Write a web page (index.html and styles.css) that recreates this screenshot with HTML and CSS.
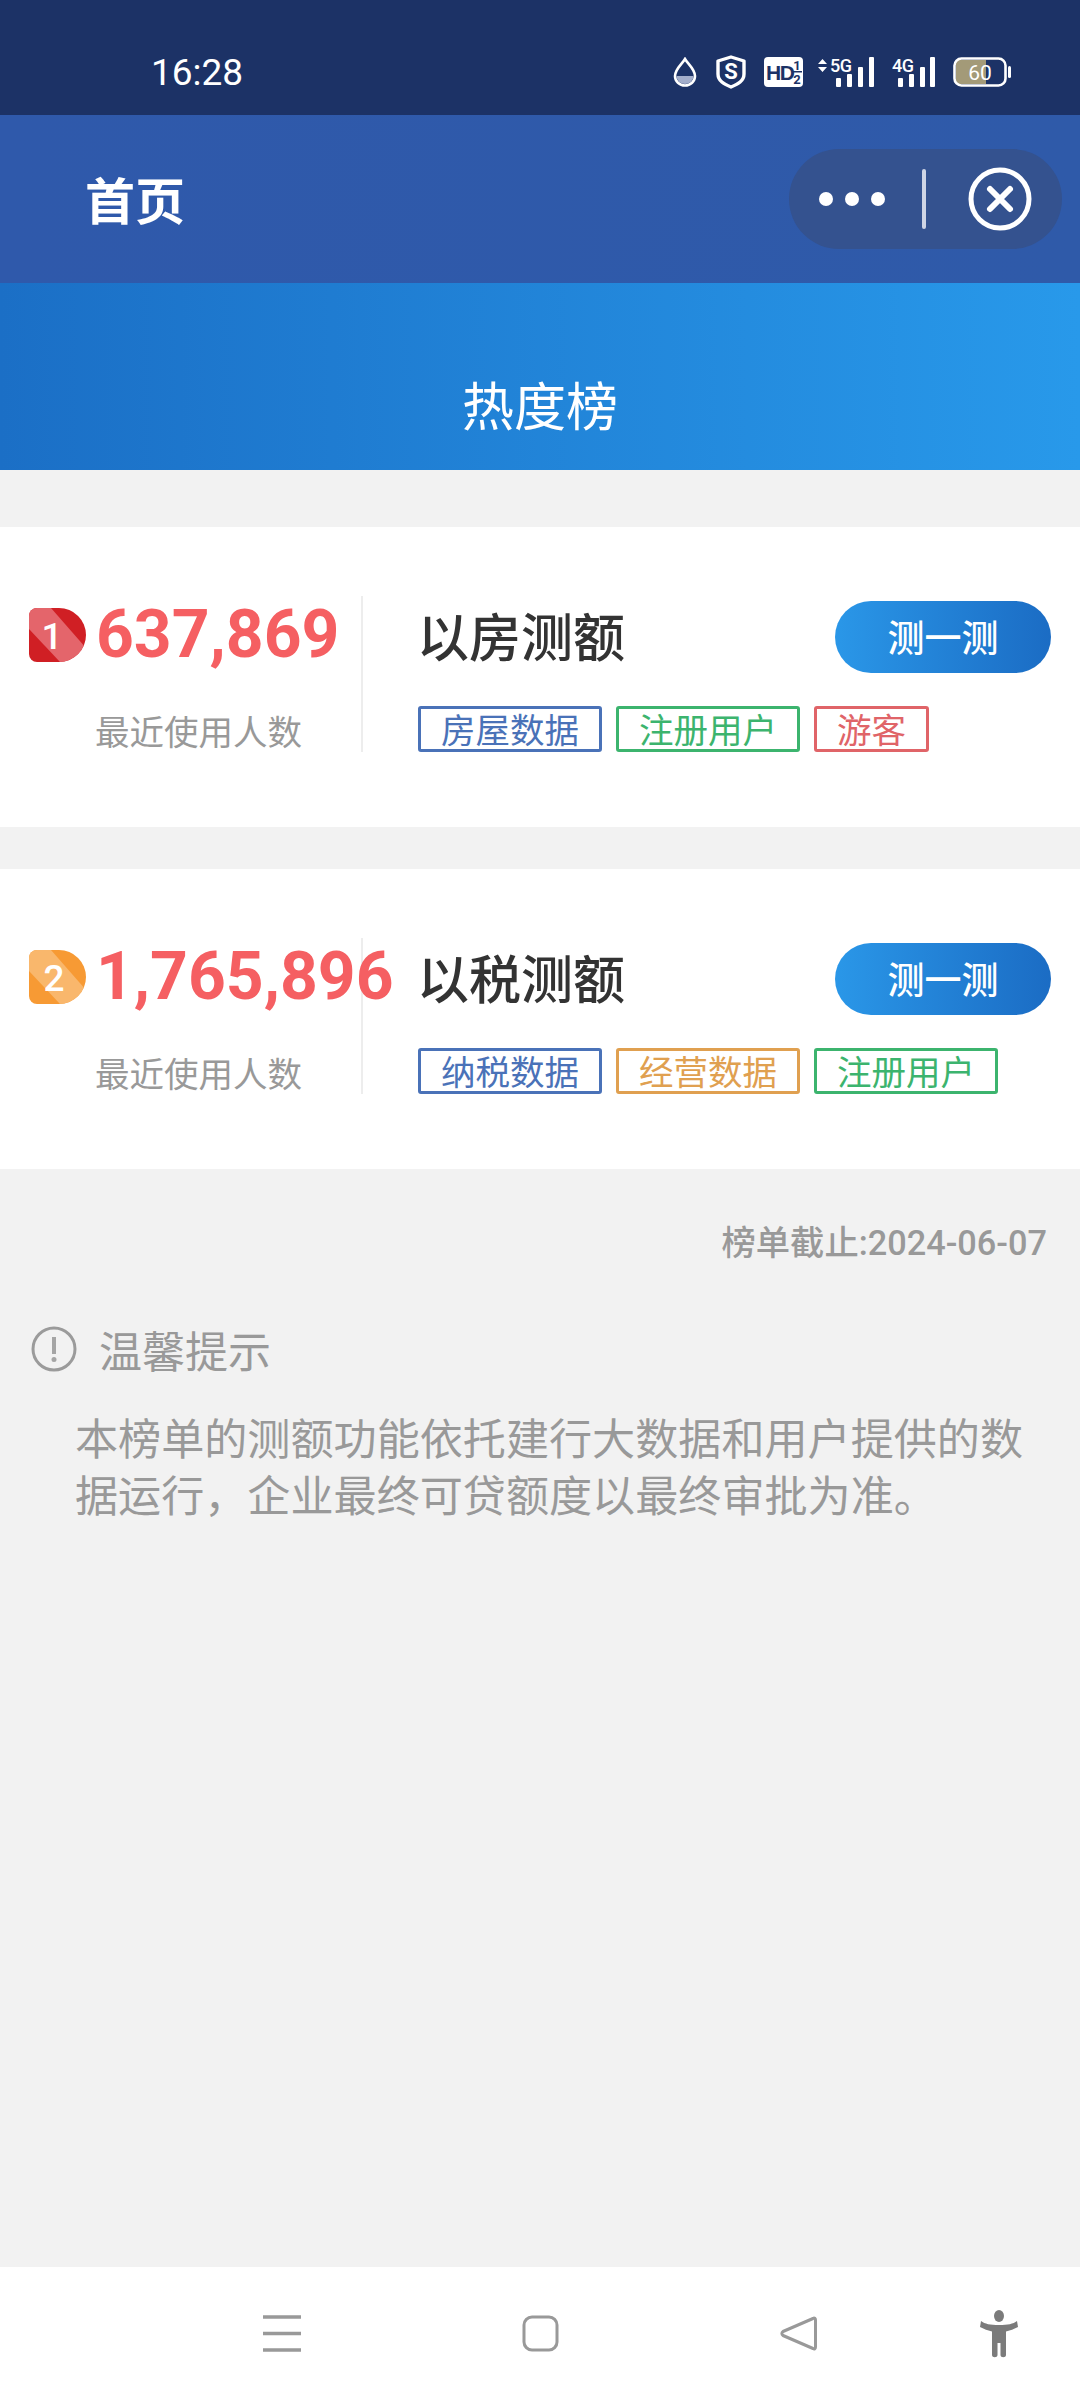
FILE: index.html
```html
<!DOCTYPE html>
<html lang="zh">
<head>
<meta charset="utf-8">
<title>热度榜</title>
<link rel="stylesheet" href="styles.css">
</head>
<body>
<div class="page">
  <header class="status">
    <span class="time">16:28</span>
    <div class="status-icons">
      <svg class="ic-drop" viewBox="0 0 24 30"><path d="M12 2C9 7 2 12 2 19a10 9.500 0 0 0 20 0C22 12 15 7 12 2Z" fill="none" stroke="#fff" stroke-width="2.600"/><path d="M3.500 19h17a8.500 8 0 0 1-17 0Z" fill="#a3aecb"/></svg>
      <svg class="ic-shield" viewBox="0 0 32 34"><path d="M3 6 16 2l13 4v13c0 7-6 10-13 13C9 29 3 26 3 19Z" fill="none" stroke="#fff" stroke-width="3.400" stroke-linejoin="round"/><text x="16" y="24" text-anchor="middle" class="svg-s">S</text></svg>
      <svg class="ic-hd" viewBox="0 0 39 30"><rect width="39" height="30" rx="4" fill="#fff"/><text x="2" y="23" class="svg-hd">HD</text><text x="33" y="13" text-anchor="middle" class="svg-frac">1</text><rect x="28" y="14" width="10" height="1.500" fill="#1c3266"/><text x="33" y="27" text-anchor="middle" class="svg-frac">2</text></svg>
      <svg class="ic-net ic-5g" viewBox="0 -4 56 34"><path d="m0 7 4.500-5 4.500 5Zm0 3 4.500 5 4.500-5Z" fill="#fff"/><text x="12" y="15" class="svg-g">5G</text><rect x="18" y="21" width="5" height="9" rx="1" fill="#fff"/><rect x="29" y="17" width="5" height="13" rx="1" fill="#fff"/><rect x="40" y="10" width="5" height="20" rx="1" fill="#fff"/><rect x="51" y="0" width="5" height="30" rx="1" fill="#fff"/></svg>
      <svg class="ic-net ic-4g" viewBox="0 -4 43 34"><text x="0" y="15" class="svg-g">4G</text><rect x="6" y="21" width="5" height="9" rx="1" fill="#fff"/><rect x="17" y="17" width="5" height="13" rx="1" fill="#fff"/><rect x="28" y="10" width="5" height="20" rx="1" fill="#fff"/><rect x="38" y="0" width="5" height="30" rx="1" fill="#fff"/></svg>
      <svg class="ic-batt" viewBox="0 0 58 30"><rect x="3" y="3" width="30" height="24" fill="#a39a78"/><rect x="1.500" y="1.500" width="51" height="27" rx="7" fill="none" stroke="#fff" stroke-width="2.600"/><rect x="55" y="9" width="3" height="12" rx="1.500" fill="#fff"/><text x="27" y="23" text-anchor="middle" class="svg-batt">60</text></svg>
    </div>
  </header>

  <nav class="nav">
    <span class="nav-title">首页</span>
    <div class="capsule">
      <div class="dots"><i></i><i></i><i></i></div>
      <span class="capsule-sep"></span>
      <svg class="capsule-close" viewBox="0 0 64 64"><circle cx="32" cy="32" r="29" fill="none" stroke="#fff" stroke-width="5"/><path d="M22 22l20 20M42 22 22 42" stroke="#fff" stroke-width="6" stroke-linecap="round"/></svg>
    </div>
  </nav>

  <div class="banner">热度榜</div>

  <section class="card card-first">
    <div class="stat">
      <div class="stat-top">
        <svg class="rank" viewBox="0 0 57 54"><defs><clipPath id="rank-a"><path d="M8 0h22a27 27 0 0 1 0 54H8a8 8 0 0 1-8-8V8a8 8 0 0 1 8-8Z"/></clipPath></defs><g clip-path="url(#rank-a)"><rect width="57" height="54" fill="#d01f24"/><path d="M0 0H22L57 40V54H31L0 21Z" fill="#e4656b"/></g><text x="23" y="41" text-anchor="middle" class="rank-num">1</text></svg>
        <span class="num">637,869</span>
      </div>
      <div class="stat-label">最近使用人数</div>
    </div>
    <div class="info">
      <div class="info-top">
        <h2 class="title">以房测额</h2>
        <button class="go">测一测</button>
      </div>
      <div class="tags">
        <span class="tag tag-blue">房屋数据</span>
        <span class="tag tag-green">注册用户</span>
        <span class="tag tag-red">游客</span>
      </div>
    </div>
  </section>

  <section class="card card-second">
    <div class="stat">
      <div class="stat-top">
        <svg class="rank" viewBox="0 0 57 54"><defs><clipPath id="rank-b"><path d="M8 0h22a27 27 0 0 1 0 54H8a8 8 0 0 1-8-8V8a8 8 0 0 1 8-8Z"/></clipPath></defs><g clip-path="url(#rank-b)"><rect width="57" height="54" fill="#f79a34"/><path d="M0 0H22L57 40V54H31L0 21Z" fill="#f9b76c"/></g><text x="25" y="41" text-anchor="middle" class="rank-num">2</text></svg>
        <span class="num">1,765,896</span>
      </div>
      <div class="stat-label">最近使用人数</div>
    </div>
    <div class="info">
      <div class="info-top">
        <h2 class="title">以税测额</h2>
        <button class="go">测一测</button>
      </div>
      <div class="tags">
        <span class="tag tag-blue">纳税数据</span>
        <span class="tag tag-orange">经营数据</span>
        <span class="tag tag-green">注册用户</span>
      </div>
    </div>
  </section>

  <p class="deadline">榜单截止:2024-06-07</p>

  <section class="tip">
    <div class="tip-head">
      <svg class="tip-icon" viewBox="0 0 46 46"><circle cx="23" cy="23" r="21" fill="none" stroke="#9b9b9b" stroke-width="3"/><path d="M23 11v17" stroke="#a5a5a5" stroke-width="4"/><circle cx="23" cy="33.500" r="2.500" fill="#a5a5a5"/></svg>
      <span>温馨提示</span>
    </div>
    <p class="tip-text">本榜单的测额功能依托建行大数据和用户提供的数据运行，企业最终可贷额度以最终审批为准。</p>
  </section>

  <footer class="sysnav">
    <svg class="sys-menu" viewBox="0 0 38 37"><path d="M0 2h38M0 18.500h38M0 35h38" stroke="#999" stroke-width="3.400"/></svg>
    <svg class="sys-home" viewBox="0 0 37 37"><rect x="2" y="2" width="33" height="33" rx="8" fill="none" stroke="#999" stroke-width="3"/></svg>
    <svg class="sys-back" viewBox="0 0 37 37"><path d="M33 3.500c1.500-1 2.500 0 2.500 1.500v27c0 1.500-1 2.500-2.500 1.500L3 20.500c-1.500-1-1.500-3 0-4Z" fill="none" stroke="#999" stroke-width="3" stroke-linejoin="round"/></svg>
    <svg class="sys-person" viewBox="0 0 38 48"><ellipse cx="19" cy="6" rx="5" ry="6" fill="#7b7b7b"/><path d="M1 11C5 14 10 15 19 15S33 14 37 11L38 17C34 19 30 20.500 26 21.500V45C26 48 20.500 48 20.500 45V33H17.500V45C17.500 48 12 48 12 45V21.500C8 20.500 4 19 0 17Z" fill="#7b7b7b"/></svg>
  </footer>
</div>
</body>
</html>
```
FILE: styles.css
```css
* { box-sizing: border-box; }
html, body { margin: 0; padding: 0; }
body { font-family: "Noto Sans CJK SC", Roboto, sans-serif; }
.page {
  width: 1080px;
  height: 2400px;
  background: #f2f2f2;
  display: flex;
  flex-direction: column;
  overflow: hidden;
}

.status {
  height: 115px;
  background: #1c3266;
  display: flex;
  align-items: center;
  padding: 29px 69px 0 151px;
  flex: none;
}
.time { font-family: Roboto, sans-serif; font-size: 37px; color: #fff; line-height: 1; }
.status-icons { margin-left: auto; display: flex; align-items: center; gap: 18px; }
.status-icons svg { height: 30px; display: block; }
.ic-drop { width: 24px; }
.status-icons .ic-shield { width: 32px; height: 34px; }
.ic-hd { width: 39px; margin-left: -1px; }
.status-icons .ic-net { height: 34px; margin-top: -4px; }
.ic-5g { width: 56px; margin-left: -3px; }
.ic-4g { width: 43px; }
.svg-s { font: 700 22px Roboto, sans-serif; fill: #fff; }
.svg-hd { font: 700 21px "Liberation Sans", sans-serif; fill: #1c3266; letter-spacing: -1.500px; }
.svg-frac { font: 700 13px Roboto, sans-serif; fill: #1c3266; }
.svg-g { font: 500 18px Roboto, sans-serif; fill: #fff; letter-spacing: -.5px; }
.svg-batt { font: 400 21px Roboto, sans-serif; fill: #fff; }
.ic-batt { width: 58px; }

.nav {
  height: 168px;
  background: linear-gradient(90deg, #2f59ab, #2f5aa9);
  display: flex;
  align-items: center;
  padding: 0 18px 0 85px;
  flex: none;
}
.nav-title { font-size: 50px; font-weight: 700; color: #fff; line-height: 1; margin-top: -2px; }
.capsule {
  margin-left: auto;
  width: 273px;
  height: 100px;
  border-radius: 50px;
  background: #34528f;
  display: flex;
  align-items: center;
  padding-left: 30px;
}
.dots { display: flex; gap: 12px; width: 64px; }
.dots i { width: 14px; height: 14px; border-radius: 50%; background: #fff; display: block; flex: none; }
.capsule-sep { width: 4px; height: 60px; background: #ced5e6; border-radius: 2px; margin-left: 39px; }
.capsule-close { width: 64px; height: 64px; margin-left: 42px; }

.banner {
  height: 187px;
  background: linear-gradient(90deg, #1b6fc6, #2899ea);
  color: #fff;
  font-size: 52px;
  text-align: center;
  line-height: 60px;
  padding-top: 91px;
  flex: none;
}

.card {
  height: 300px;
  background: #fff;
  display: flex;
  flex: none;
}
.card-first { margin-top: 57px; }
.card-second { margin-top: 42px; }

.stat {
  width: 363px;
  flex: none;
  margin-top: 69px;
  height: 156px;
  padding-left: 29px;
  border-right: 2px solid #ededed;
  white-space: nowrap;
}
.stat-top { display: flex; align-items: flex-start; }
.rank { width: 57px; height: 54px; flex: none; margin-top: 12px; }
.rank-num { font: 500 37px Roboto, sans-serif; fill: #fff; }
.num {
  font-family: Roboto, sans-serif;
  font-weight: 700;
  font-size: 66px;
  line-height: 78px;
  color: #f55f62;
  margin-left: 10px;
}
.stat-label {
  font-size: 34.500px;
  line-height: 48px;
  color: #999;
  margin: 32px 0 0 66px;
}

.info { flex: 1; padding: 74px 29px 0 54px; }
.info-top { display: flex; align-items: center; justify-content: space-between; height: 72px; }
.title { margin: -4px 0 0; font-size: 52px; font-weight: 500; color: #333; line-height: 72px; }
.go {
  width: 216px;
  height: 72px;
  border: 0;
  padding: 0 0 2px;
  border-radius: 36px;
  background: linear-gradient(90deg, #2a97e8, #1b6cc4);
  color: #fff;
  font-family: inherit;
  font-size: 37px;
  font-weight: 500;
}
.tags { display: flex; gap: 14px; margin-top: 33px; margin-left: 1px; }
.tag {
  height: 46px;
  padding: 0 20px;
  border: 3px solid;
  border-radius: 3px;
  font-size: 34.500px;
  line-height: 38px;
  white-space: nowrap;
}
.tag-blue { color: #4a72b8; border-color: #4a72b8; }
.tag-green { color: #3cb46e; border-color: #3cb46e; }
.tag-red { color: #e06468; border-color: #e06468; }
.tag-orange { color: #e0a050; border-color: #e0a050; }

.deadline {
  margin: 50px 33px 0 0;
  text-align: right;
  font-family: Roboto, "Noto Sans CJK SC", sans-serif;
  font-size: 34.300px;
  font-weight: 500;
  line-height: 48px;
  color: #999;
}

.tip { padding: 0 0 0 31px; margin-top: 52px; flex: 1; }
.tip-head { display: flex; align-items: center; font-size: 43px; line-height: 60px; color: #999; }
.tip-icon { width: 46px; height: 46px; margin-right: 22px; flex: none; }
.tip-text { margin: 29px 0 0 44px; width: 960px; font-size: 43.100px; line-height: 57px; color: #999; }

.sysnav {
  height: 133px;
  background: #fff;
  flex: none;
  display: flex;
  align-items: center;
  padding-left: 263px;
}
.sys-menu { width: 38px; height: 37px; }
.sys-home { width: 37px; height: 37px; margin-left: 221px; }
.sys-back { width: 37px; height: 37px; margin-left: 221px; }
.sys-person { width: 38px; height: 48px; margin-left: 163px; }
```
